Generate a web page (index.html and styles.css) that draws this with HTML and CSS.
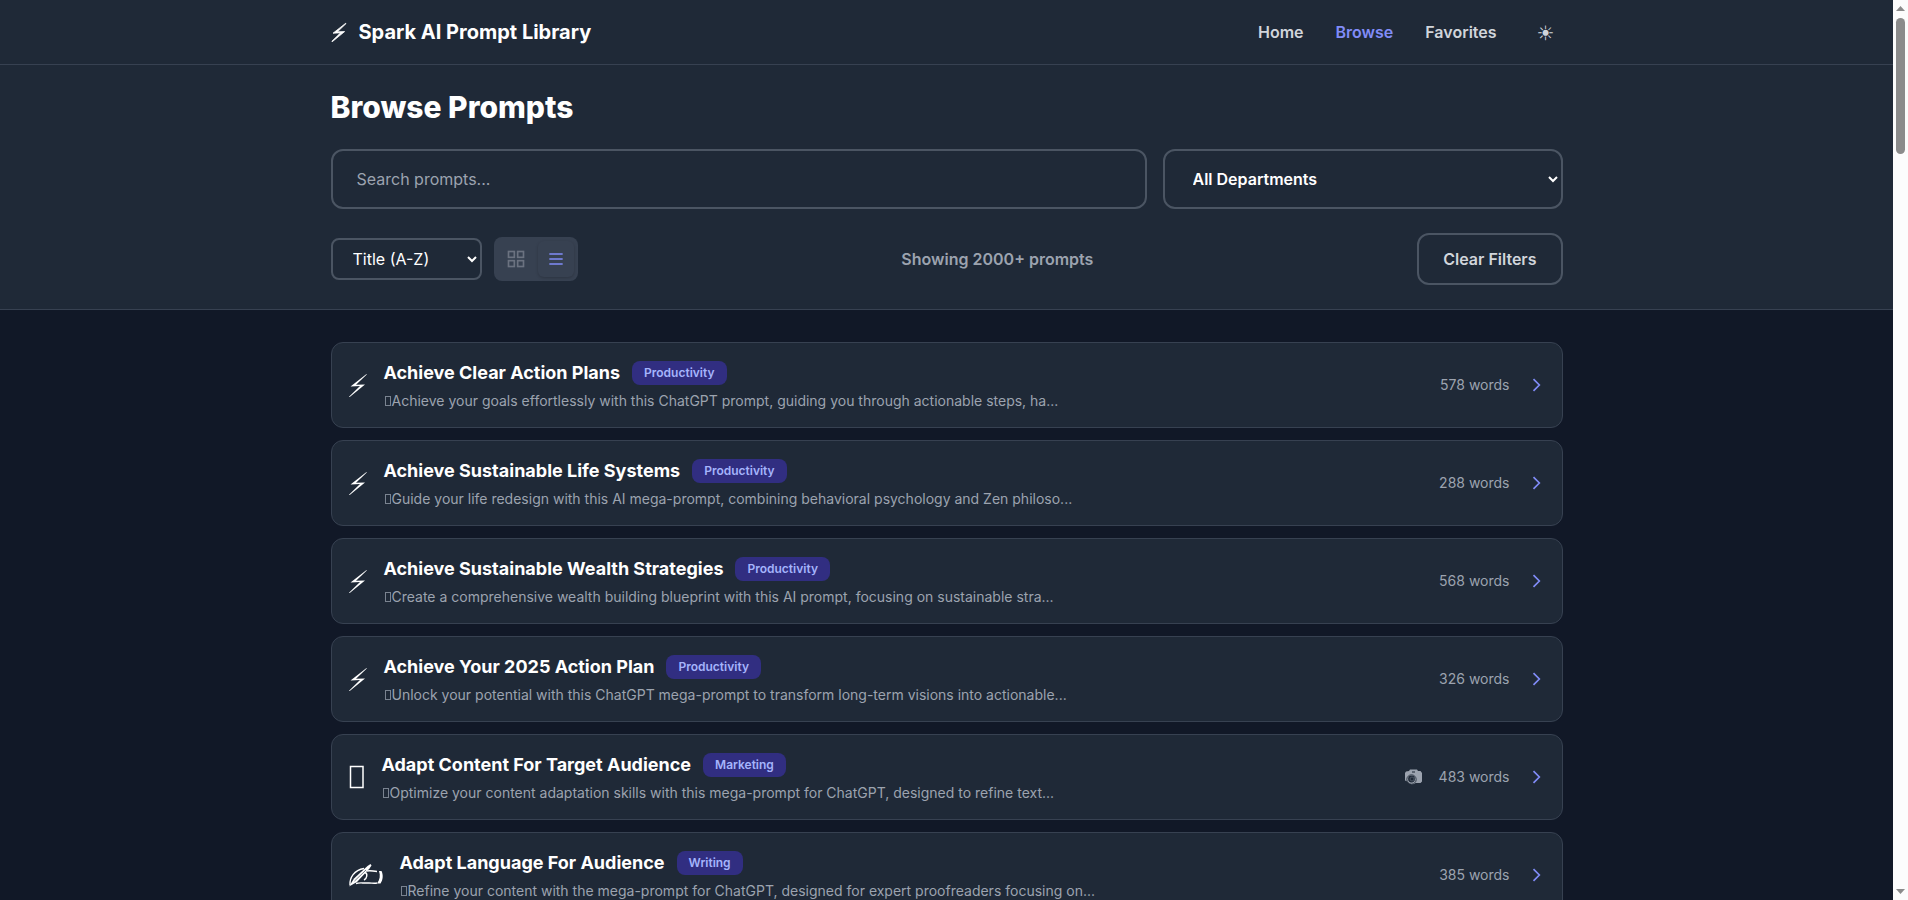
FILE: index.html
```html
<!DOCTYPE html>
<html lang="en">
<head>
<meta charset="utf-8">
<title>Browse Prompts - Spark AI Prompt Library</title>
<link rel="stylesheet" href="styles.css">
</head>
<body>
<svg class="symbols" aria-hidden="true">
  <symbol id="bolt" viewBox="0 0 20 24"><path d="M18.500 1L2.500 13.500l9.500-.5L1 23.700l.5.5L17 11.500l-9 .3L18.800 1.500z"/></symbol>
</svg>
<div class="page">
<header class="site-header">
  <div class="container header-row">
    <a class="brand" href="#"><svg class="brand-icon"><use href="#bolt"/></svg><span>Spark AI Prompt Library</span></a>
    <nav class="nav">
      <a href="#">Home</a>
      <a class="current" href="#">Browse</a>
      <a href="#">Favorites</a>
      <button class="theme-button" type="button" aria-label="Toggle theme">☀&#xFE0E;</button>
    </nav>
  </div>
</header>
<section class="filters">
  <div class="container">
    <h1>Browse Prompts</h1>
    <div class="search-row">
      <input class="search" type="text" placeholder="Search prompts..." aria-label="Search prompts">
      <select class="department" aria-label="Department"><option>All Departments</option></select>
    </div>
    <div class="tools-row">
      <div class="tools-left">
        <select class="sort" aria-label="Sort by"><option>Title (A-Z)</option><option>Word Count</option></select>
        <div class="view-toggle">
          <button class="view-button" type="button" aria-label="Grid view">
            <svg class="icon" viewBox="0 0 24 24"><rect x="3" y="3" width="7" height="7"/><rect x="14" y="3" width="7" height="7"/><rect x="3" y="14" width="7" height="7"/><rect x="14" y="14" width="7" height="7"/></svg>
          </button>
          <button class="view-button active" type="button" aria-label="List view">
            <svg class="icon" viewBox="0 0 24 24"><path d="M4 6h16M4 12h16M4 18h16"/></svg>
          </button>
        </div>
      </div>
      <p class="result-count">Showing 2000+ prompts</p>
      <button class="clear-button" type="button">Clear Filters</button>
    </div>
  </div>
</section>
<main class="container prompt-list">
  <a class="card" href="#">
    <svg class="card-icon"><use href="#bolt"/></svg>
    <div class="card-body">
      <div class="card-head"><h2>Achieve Clear Action Plans</h2><span class="badge">Productivity</span></div>
      <p><i class="mark"></i>Achieve your goals effortlessly with this ChatGPT prompt, guiding you through actionable steps, ha...</p>
    </div>
    <div class="card-meta"><span>578 words</span><svg class="icon chevron" viewBox="0 0 24 24"><path d="M9 5l7 7-7 7"/></svg></div>
  </a>
  <a class="card" href="#">
    <svg class="card-icon"><use href="#bolt"/></svg>
    <div class="card-body">
      <div class="card-head"><h2>Achieve Sustainable Life Systems</h2><span class="badge">Productivity</span></div>
      <p><i class="mark"></i>Guide your life redesign with this AI mega-prompt, combining behavioral psychology and Zen philoso...</p>
    </div>
    <div class="card-meta"><span>288 words</span><svg class="icon chevron" viewBox="0 0 24 24"><path d="M9 5l7 7-7 7"/></svg></div>
  </a>
  <a class="card" href="#">
    <svg class="card-icon"><use href="#bolt"/></svg>
    <div class="card-body">
      <div class="card-head"><h2>Achieve Sustainable Wealth Strategies</h2><span class="badge">Productivity</span></div>
      <p><i class="mark"></i>Create a comprehensive wealth building blueprint with this AI prompt, focusing on sustainable stra...</p>
    </div>
    <div class="card-meta"><span>568 words</span><svg class="icon chevron" viewBox="0 0 24 24"><path d="M9 5l7 7-7 7"/></svg></div>
  </a>
  <a class="card" href="#">
    <svg class="card-icon"><use href="#bolt"/></svg>
    <div class="card-body">
      <div class="card-head"><h2>Achieve Your 2025 Action Plan</h2><span class="badge">Productivity</span></div>
      <p><i class="mark"></i>Unlock your potential with this ChatGPT mega-prompt to transform long-term visions into actionable...</p>
    </div>
    <div class="card-meta"><span>326 words</span><svg class="icon chevron" viewBox="0 0 24 24"><path d="M9 5l7 7-7 7"/></svg></div>
  </a>
  <a class="card" href="#">
    <svg class="card-icon box" viewBox="0 0 18 24"><rect x="2.500" y="1.500" width="12.500" height="21"/></svg>
    <div class="card-body">
      <div class="card-head"><h2>Adapt Content For Target Audience</h2><span class="badge">Marketing</span></div>
      <p><i class="mark"></i>Optimize your content adaptation skills with this mega-prompt for ChatGPT, designed to refine text...</p>
    </div>
    <div class="card-meta">
      <svg class="camera" viewBox="0 0 18 16"><path d="M1 2.500L4 2 5 .5h7l1 1.500h2.500L17 4v8.500L15.500 14h-5a4.500 4.500 0 0 1-7-1L0 11.500V4z" fill="currentColor"/><path d="M7 3h3" stroke="#1f2937"/><circle cx="6.500" cy="10.500" r="4.700" fill="#9ca3af" stroke="#1f2937" stroke-width=".8"/><circle cx="6.500" cy="10" r="3.400" fill="#1f2937"/><circle cx="7" cy="10" r="2" fill="none" stroke="#4b5563"/></svg>
      <span>483 words</span><svg class="icon chevron" viewBox="0 0 24 24"><path d="M9 5l7 7-7 7"/></svg></div>
  </a>
  <a class="card" href="#">
    <svg class="card-icon hand" viewBox="0 0 36 24"><path d="M2 22C1.500 15 6 7 16 5.500M8 20.500c3-1 6-.5 9-.5h4c3 0 5 .5 8 0M19 8c4-1 6 .5 10 .5M17 9.500c3 1 2 6-1 7.500" fill="none" stroke="currentColor" stroke-width="1.400"/><path d="M1 23.500l5-8L19.500 3l3-2 1 1.500-2 3L9 19z"/><path d="M31 8h2.500c2 4 1.500 9-1 12.500H29c3-4 3.500-8 2-12.500z"/><path d="M6.500 18L18 7" stroke="#1f2937" fill="none" stroke-width=".6"/></svg>
    <div class="card-body">
      <div class="card-head"><h2>Adapt Language For Audience</h2><span class="badge">Writing</span></div>
      <p><i class="mark"></i>Refine your content with the mega-prompt for ChatGPT, designed for expert proofreaders focusing on...</p>
    </div>
    <div class="card-meta"><span>385 words</span><svg class="icon chevron" viewBox="0 0 24 24"><path d="M9 5l7 7-7 7"/></svg></div>
  </a>
</main>
</div>
<div class="scrollbar" aria-hidden="true">
  <svg class="scroll-arrow" viewBox="0 0 9 5"><path d="M0 5L4.500 0 9 5z"/></svg>
  <div class="scroll-track"><div class="scroll-thumb"></div></div>
  <svg class="scroll-arrow" viewBox="0 0 9 5"><path d="M0 0h9L4.500 5z"/></svg>
</div>
</body>
</html>
```
FILE: styles.css
```css
* { box-sizing: border-box; margin: 0; padding: 0; }
body { display: flex; height: 100vh; overflow: hidden; background: #111827; color: #fff; font: 16px/24px Inter, sans-serif; }
a { color: inherit; text-decoration: none; }
button, input, select { font: inherit; color: inherit; background: none; border: 0; }
button { cursor: pointer; }
.symbols { display: none; }
.page { flex: 1; min-width: 0; overflow-y: auto; scrollbar-width: none; }
.container { max-width: 1280px; margin: 0 auto; padding: 0 24px; }
.icon { display: block; width: 20px; height: 20px; fill: none; stroke: currentColor; stroke-width: 2; }

.site-header { background: #1f2937; border-bottom: 1px solid #374151; }
.header-row { display: flex; align-items: center; justify-content: space-between; height: 64px; }
.brand { display: flex; align-items: center; gap: 12px; font-size: 20px; line-height: 28px; font-weight: 700; }
.brand-icon { width: 16px; height: 20px; fill: currentColor; stroke: currentColor; }
.nav { display: flex; align-items: center; gap: 32px; color: #d1d5db; font-weight: 600; }
.nav .current { color: #818cf8; }
.theme-button { padding: 10px 8px 8px; font-family: "DejaVu Sans", sans-serif; font-size: 20px; line-height: 28px; font-weight: 400; }

.filters { background: #1f2937; border-bottom: 1px solid #374151; padding: 24px 0; }
h1 { font-size: 30px; line-height: 36px; font-weight: 800; margin-bottom: 24px; }
.search-row { display: grid; grid-template-columns: repeat(3, 1fr); gap: 16px; margin-bottom: 24px; }
.search, .department { border: 2px solid #4b5563; border-radius: 12px; padding: 16px 24px; height: 60px; background: #1f2937; }
.search { grid-column: span 2; }
.search::placeholder { color: #9ca3af; }
.department { font-weight: 600; padding-right: 0; }
.tools-row { display: flex; align-items: center; justify-content: space-between; }
.tools-left { display: flex; align-items: center; gap: 12px; }
.sort { border: 2px solid #4b5563; border-radius: 8px; padding: 8px 0 8px 16px; width: 151px; height: 42px; background: #1f2937; }
.view-toggle { display: flex; gap: 4px; padding: 4px; border-radius: 8px; background: #374151; }
.view-button { padding: 8px; border-radius: 6px; color: #6b7280; }
.view-button.active { color: #818cf8; box-shadow: 0 1px 3px rgba(0, 0, 0, .2); }
.result-count { color: #9ca3af; font-weight: 600; }
.clear-button { border: 2px solid #4b5563; border-radius: 12px; padding: 12px 24px; color: #d1d5db; font-weight: 600; }

.prompt-list { display: flex; flex-direction: column; gap: 12px; padding-top: 32px; padding-bottom: 32px; }
.card { display: flex; align-items: center; gap: 16px; padding: 16px; border: 1px solid #374151; border-radius: 12px; background: #1f2937; }
.card-icon { flex: none; width: 20px; height: 24px; fill: currentColor; }
.card-icon.box { width: 18px; fill: none; stroke: currentColor; stroke-width: 1.5; }
.card-icon.hand { width: 36px; }
.card-body { flex: 1; min-width: 0; }
.card-head { display: flex; align-items: center; gap: 12px; margin-bottom: 4px; }
h2 { font-size: 18px; line-height: 28px; font-weight: 700; }
.badge { padding: 4px 12px; border-radius: 8px; background: #312e81; color: #a5b4fc; font-size: 12px; line-height: 16px; font-weight: 600; }
.card p { color: #9ca3af; font-size: 14px; line-height: 20px; overflow: hidden; text-overflow: ellipsis; white-space: nowrap; }
.mark { display: inline-block; width: 6px; height: 10px; margin: 0 1px; border: 1px solid #7a8390; }
.card-meta { display: flex; align-items: center; gap: 16px; color: #9ca3af; font-size: 14px; line-height: 20px; }
.camera { width: 18px; height: 16px; }
.chevron { color: #818cf8; }

.scrollbar { display: flex; flex-direction: column; align-items: center; gap: 7px; flex: 0 0 15px; padding: 6px 0; background: #fcfcfc; }
.scroll-arrow { width: 9px; height: 5px; fill: #8b8b8b; }
.scroll-track { flex: 1; width: 9px; }
.scroll-thumb { height: 136px; border-radius: 5px; background: #8b8b8b; }
```
